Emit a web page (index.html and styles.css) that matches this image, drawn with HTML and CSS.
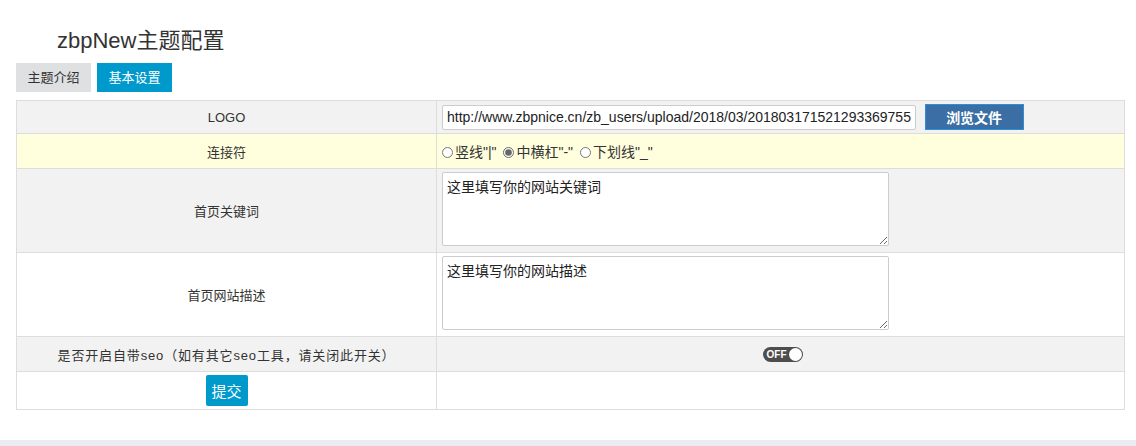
FILE: index.html
```html
<!DOCTYPE html>
<html lang="zh-CN">
<head>
    <meta charset="UTF-8">
    <title>zbpNew主题配置</title>
    <link rel="stylesheet" href="styles.css">
</head>
<body>

    <div class="main">
        <h1 class="title">zbpNew主题配置</h1>
        <div class="tabs">
            <a class="tab">主题介绍</a>
            <a class="tab active">基本设置</a>
        </div>

        <form>
            <table class="settings">
                <tr class="row-grey">
                    <td class="label">LOGO</td>
                    <td class="value">
                        <input type="text" class="url" value="http://www.zbpnice.cn/zb_users/upload/2018/03/201803171521293369755.png">
                        <button type="button" class="browse">浏览文件</button>
                    </td>
                </tr>
                <tr class="row-yellow">
                    <td class="label">连接符</td>
                    <td class="value radios">
                        <label><input type="radio" name="sep">竖线"|"</label>
                        <label><input type="radio" name="sep" checked>中横杠"-"</label>
                        <label><input type="radio" name="sep">下划线"_"</label>
                    </td>
                </tr>
                <tr class="row-grey row-tall">
                    <td class="label">首页关键词</td>
                    <td class="value top"><textarea>这里填写你的网站关键词</textarea></td>
                </tr>
                <tr class="row-white row-tall">
                    <td class="label">首页网站描述</td>
                    <td class="value top"><textarea>这里填写你的网站描述</textarea></td>
                </tr>
                <tr class="row-grey row-seo">
                    <td class="label seo">是否开启自带seo（如有其它seo工具，请关闭此开关）</td>
                    <td class="value center">
                        <span class="toggle"><span class="toggle-text">OFF</span><span class="knob"></span></span>
                    </td>
                </tr>
                <tr class="row-white row-submit">
                    <td class="label"><button type="submit" class="submit">提交</button></td>
                    <td class="value"></td>
                </tr>
            </table>
        </form>
    </div>

    <div class="footer"></div>

</body>
</html>
```

FILE: styles.css
```css
body {
    margin: 0;
    font-family: "Liberation Sans", "Noto Sans CJK SC", sans-serif;
    font-size: 13px;
    color: #333;
    background: #fff;
}

.main {
    padding: 0 11px 0 16px;
    height: 440px;
    box-sizing: border-box;
    padding-top: 26px;
}

.title {
    margin: 0 0 7px 41px;
    font-size: 22px;
    font-weight: normal;
    line-height: 30px;
    color: #333;
}

.tabs {
    display: flex;
    gap: 6px;
    margin-bottom: 8px;
}

.tab {
    display: block;
    width: 75px;
    height: 29px;
    line-height: 29px;
    text-align: center;
    background: #dfe0e2;
    color: #333;
}

.tab.active {
    background: #0099cc;
    color: #fff;
}

.settings {
    width: 100%;
    border-collapse: collapse;
    border: 1px solid #ddd;
}

.settings td {
    border: 1px solid #ddd;
    padding: 3px 5px;
    vertical-align: middle;
}

.settings td.top {
    vertical-align: top;
    padding-top: 3px;
}

.settings .label {
    width: 409px;
    text-align: center;
}

.settings .seo {
    letter-spacing: 0.85px;
}

.row-grey {
    background: #f2f2f2;
}

.row-yellow {
    background: #ffffdd;
}

.row-white {
    background: #fff;
}

.row-grey:first-child {
    height: 33px;
}

.row-yellow {
    height: 35px;
}

.row-tall {
    height: 84px;
}

.row-seo {
    height: 35px;
}

.row-submit {
    height: 38px;
}

.url {
    width: 474px;
    height: 25px;
    box-sizing: border-box;
    border: 1px solid #ccc;
    border-radius: 2px;
    padding: 0 4px;
    font-family: "Liberation Sans", sans-serif;
    font-size: 14px;
    color: #222;
    vertical-align: middle;
}

.browse {
    margin-left: 5px;
    width: 99px;
    height: 26px;
    background: #3a6ea5;
    border: 1px solid #2f8fd6;
    color: #fff;
    font-family: "Liberation Sans", "Noto Sans CJK SC", sans-serif;
    font-size: 14px;
    font-weight: bold;
    vertical-align: middle;
}

.radios {
    font-size: 14px;
}

.radios label {
    margin-right: 3px;
}

.radios input {
    width: 11px;
    height: 11px;
    margin: 0 2px 0 0;
    vertical-align: -1px;
    accent-color: #666;
}

textarea {
    display: block;
    width: 447px;
    height: 74px;
    box-sizing: border-box;
    border: 1px solid #ccc;
    border-radius: 2px;
    padding: 3px 4px;
    font-family: "Noto Sans CJK SC", sans-serif;
    font-size: 14px;
    color: #222;
}

.center {
    text-align: center;
}

.toggle {
    display: inline-flex;
    align-items: center;
    justify-content: space-between;
    width: 40px;
    height: 15px;
    box-sizing: border-box;
    border-radius: 8px;
    background: #4d4d4d;
    padding: 0 1px 0 4px;
    margin-left: 4px;
    vertical-align: middle;
}

.toggle-text {
    color: #fff;
    font-size: 10px;
    font-weight: bold;
    line-height: 15px;
}

.knob {
    width: 13px;
    height: 13px;
    border-radius: 50%;
    background: #fff;
}

.submit {
    width: 42px;
    height: 31px;
    border: none;
    border-radius: 2px;
    background: #0099cc;
    color: #fff;
    font-family: "Noto Sans CJK SC", sans-serif;
    font-size: 15px;
    padding: 0;
}

.footer {
    height: 6px;
    background: #e9edf2;
}
```
